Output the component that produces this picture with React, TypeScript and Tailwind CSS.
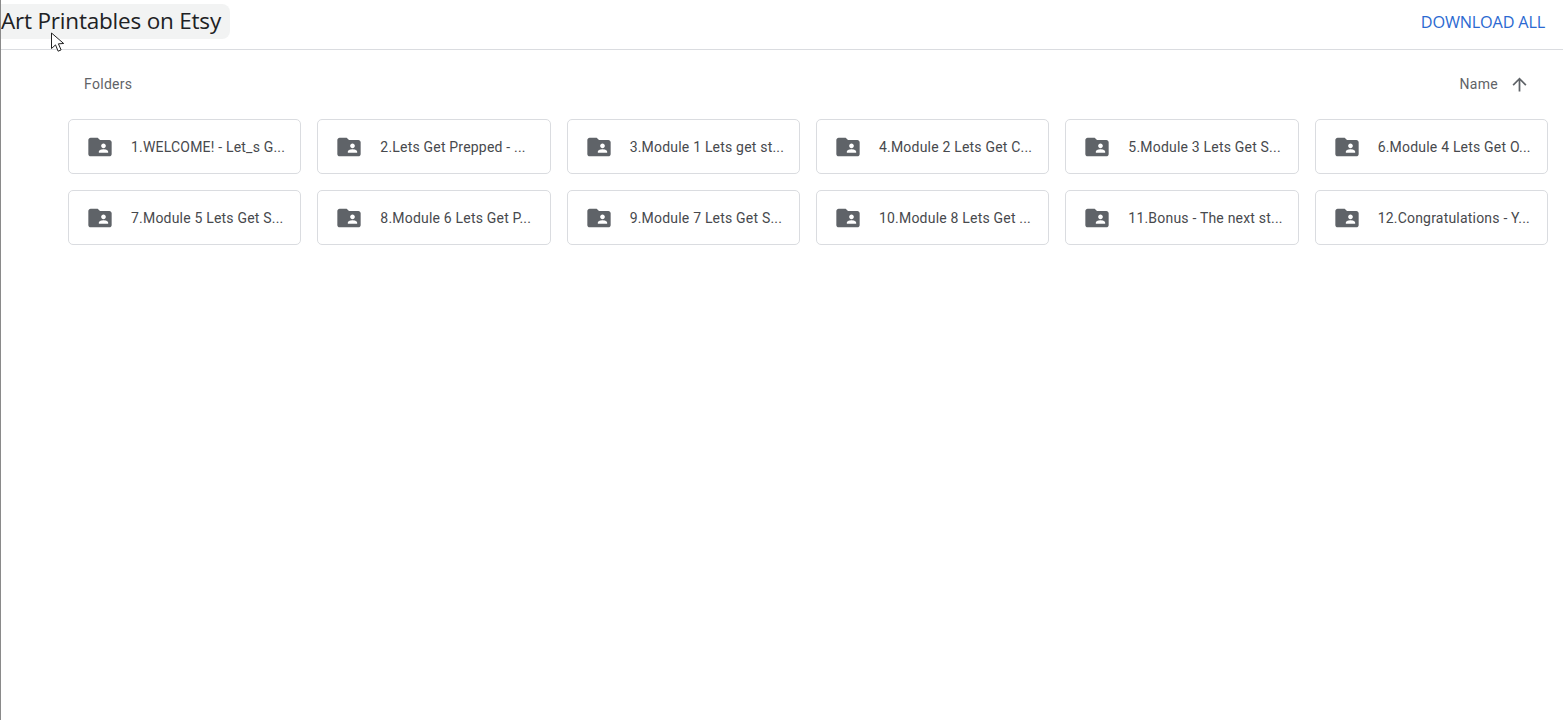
const FOLDERS = [
  "1.WELCOME! - Let_s G...",
  "2.Lets Get Prepped - ...",
  "3.Module 1 Lets get st...",
  "4.Module 2 Lets Get C...",
  "5.Module 3 Lets Get S...",
  "6.Module 4 Lets Get O...",
  "7.Module 5 Lets Get S...",
  "8.Module 6 Lets Get P...",
  "9.Module 7 Lets Get S...",
  "10.Module 8 Lets Get ...",
  "11.Bonus - The next st...",
  "12.Congratulations - Y...",
]

function SharedFolderIcon() {
  return (
    <svg width="28" height="28" viewBox="0 0 24 24" className="shrink-0" fill="#5f6368">
      <path d="M20 6h-8l-2-2H4c-1.1 0-2 .9-2 2v12c0 1.1.9 2 2 2h16c1.1 0 2-.9 2-2V8c0-1.1-.9-2-2-2zm-5 3c1.1 0 2 .9 2 2s-.9 2-2 2-2-.9-2-2 .9-2 2-2zm4 8h-8v-1c0-1.33 2.67-2 4-2s4 .67 4 2v1z" />
    </svg>
  )
}

function ArrowUpward() {
  return (
    <svg width="21" height="21" viewBox="0 0 24 24" fill="#5f6368">
      <path d="M4 12l1.41 1.41L11 7.83V20h2V7.83l5.58 5.59L20 12l-8-8-8 8z" />
    </svg>
  )
}

export default function App() {
  return (
    <div className="relative h-[720px] w-full overflow-hidden border-l-[1px] border-[#8a8a8a] bg-white font-['Roboto',sans-serif]">
      {/* Top bar */}
      <div className="flex h-[50px] items-center justify-between border-b border-[#dadce0] pr-[18px]">
        <div className="mt-[-7px] flex h-[35px] w-[229px] items-center rounded-r-lg bg-[#f2f3f3]">
          <span className="whitespace-nowrap font-['Open_Sans',sans-serif] text-[22.5px] leading-none tracking-[-0.2px] text-[#202124]">
            Art Printables on Etsy
          </span>
        </div>
        <span className="mt-[-4px] font-['Open_Sans',sans-serif] text-[16.3px] tracking-[-0.2px] text-[#2b69d1]">DOWNLOAD ALL</span>
      </div>

      {/* Section heading */}
      <div className="flex h-[69px] items-center justify-between pb-[1px] pl-[83px] pr-[33px]">
        <span className="text-sm tracking-[0.3px] text-[#5f6368]">Folders</span>
        <div className="flex items-center gap-[11px]">
          <span className="text-sm tracking-[0.3px] text-[#5f6368]">Name</span>
          <ArrowUpward />
        </div>
      </div>

      {/* Folder cards */}
      <div className="ml-[67px] mr-[15px] grid grid-cols-6 gap-[16px]">
        {FOLDERS.map((name) => (
          <div key={name} className="flex h-[55px] min-w-0 items-center gap-[17px] rounded-[5px] border border-[#dadce0] bg-white pl-[17px]">
            <SharedFolderIcon />
            <span className="whitespace-nowrap text-sm tracking-[0.2px] text-[#47494d]">{name}</span>
          </div>
        ))}
      </div>

      {/* Mouse cursor */}
      <svg width="16" height="22" viewBox="0 0 16 22" className="absolute left-[49px] top-[32px]">
        <path d="M1.5 1v15.5l4-3.6 2.6 6.3 3-1.3-2.7-6.1 5.3-.3z" fill="#fff" stroke="#222" strokeWidth="1" />
      </svg>
    </div>
  )
}
